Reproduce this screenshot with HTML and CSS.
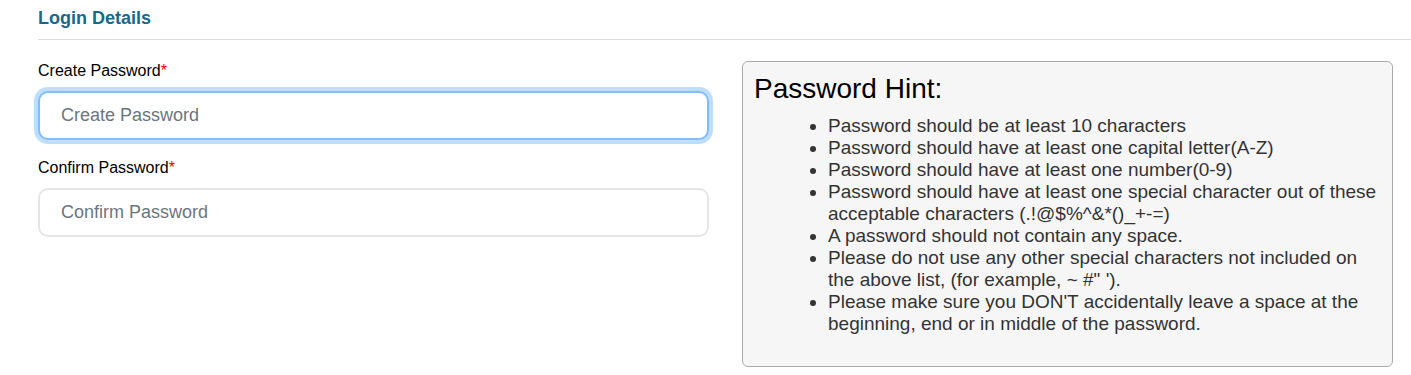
FILE: index.html
```html
<!DOCTYPE html>
<html lang="en">
<head>
    <meta charset="UTF-8">
    <meta name="viewport" content="width=device-width, initial-scale=1.0">
    <title>Login Details</title>
    <link rel="stylesheet" href="styles.css">
</head>
<body>
<section class="login">
    <h2 class="section-title">Login Details</h2>
    <div class="row">
        <div class="col-form">
            <div class="form-group">
                <label for="password">Create Password<span class="required">*</span></label>
                <input type="password" id="password" class="form-control focused" placeholder="Create Password">
            </div>
            <div class="form-group">
                <label for="confirm">Confirm Password<span class="required">*</span></label>
                <input type="password" id="confirm" class="form-control" placeholder="Confirm Password">
            </div>
        </div>
        <div class="col-hint">
            <div class="hint-box">
                <h3>Password Hint:</h3>
                <ul>
                    <li>Password should be at least 10 characters</li>
                    <li>Password should have at least one capital letter(A-Z)</li>
                    <li>Password should have at least one number(0-9)</li>
                    <li>Password should have at least one special character out of these acceptable characters (.!@$%^&amp;*()_+-=)</li>
                    <li>A password should not contain any space.</li>
                    <li>Please do not use any other special characters not included on the above list, (for example, ~ #" ').</li>
                    <li>Please make sure you DON'T accidentally leave a space at the beginning, end or in middle of the password.</li>
                </ul>
            </div>
        </div>
    </div>
</section>
</body>
</html>
```

FILE: styles.css
```css
* {
    margin: 0;
    padding: 0;
    box-sizing: border-box;
}
body {
    font-family: 'Liberation Sans', Arial, sans-serif;
    color: #000;
    background-color: #fff;
}
.login {
    padding-left: 38px;
}
.section-title {
    font-size: 18px;
    font-weight: bold;
    line-height: 20px;
    color: #17698b;
    padding: 8px 0 11px;
    border-bottom: 1px solid #ddd;
}
.row {
    display: flex;
    align-items: flex-start;
    gap: 33px;
    margin-top: 19px;
}
.col-form {
    width: 671px;
}
.form-group {
    margin-bottom: 16px;
}
.form-group label {
    display: block;
    font-size: 16px;
    line-height: 24px;
    margin-bottom: 8px;
}
.required {
    color: #e00;
}
.form-control {
    display: block;
    width: 100%;
    height: 49px;
    padding: 0 21px;
    font-family: inherit;
    font-size: 18px;
    color: #495057;
    background: #fff;
    border: 2px solid #e6e6e6;
    border-radius: 10px;
    outline: none;
}
.form-control::placeholder {
    color: #6c757d;
}
.form-control.focused {
    border-color: #80bdff;
    box-shadow: 0 0 0 4px rgba(0, 123, 255, 0.25);
}
.col-hint {
    width: 651px;
    margin-top: 2px;
}
.hint-box {
    background: #f6f6f6;
    border: 1px solid #aaa;
    border-radius: 6px;
    padding: 11px 11px 31px;
}
.hint-box h3 {
    font-size: 28px;
    font-weight: normal;
    line-height: normal;
    margin-bottom: 10px;
}
.hint-box ul {
    padding-left: 74px;
    font-size: 19px;
    line-height: normal;
    color: #333;
}
```
